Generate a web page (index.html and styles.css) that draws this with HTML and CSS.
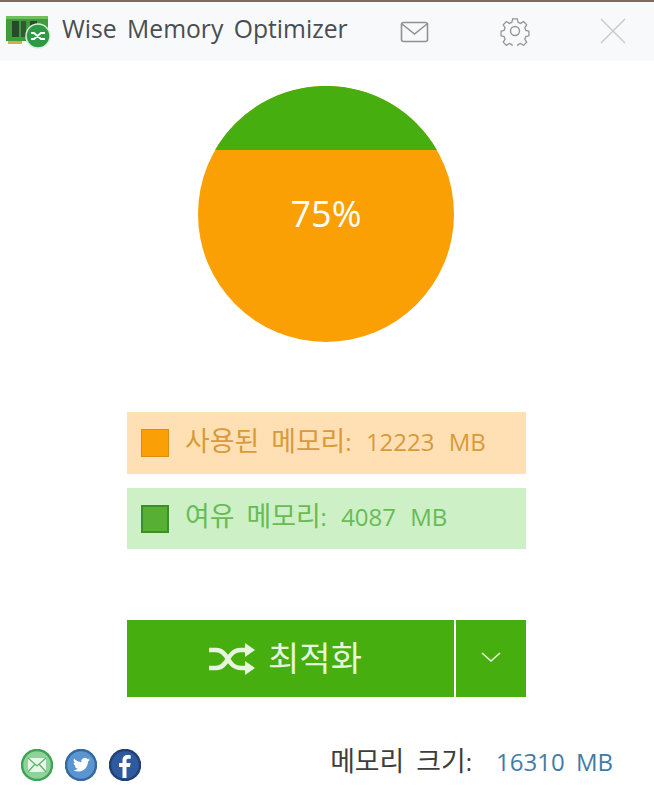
FILE: index.html
```html
<!DOCTYPE html>
<html lang="ko">
<head>
    <meta charset="UTF-8">
    <meta name="viewport" content="width=device-width, initial-scale=1.0">
    <title>Wise Memory Optimizer</title>
    <link rel="stylesheet" href="styles.css">
</head>
<body>
    <div class="titlebar">
        <svg class="logo" width="46" height="36" viewBox="0 0 46 36">
            <rect x="1" y="1" width="42" height="25" fill="#3f9b3c"/>
            <rect x="1" y="1" width="42" height="3" fill="#6fc05a"/>
            <rect x="3" y="26" width="14" height="3" fill="#c9b24a"/>
            <rect x="7" y="6" width="7" height="16" fill="#274a2a"/>
            <rect x="16" y="6" width="5" height="16" fill="#2f5a33"/>
            <rect x="25" y="6" width="7" height="9" fill="#274a2a"/>
            <circle cx="33" cy="21" r="12" fill="#2f9a45" stroke="#d8efd8" stroke-width="1.5"/>
            <path d="M26 18h3l7 6h4M26 24h3l7-6h4" fill="none" stroke="#fff" stroke-width="1.8"/>
        </svg>
        <span class="app-name">Wise Memory Optimizer</span>
        <svg class="mail-btn" width="30" height="24" viewBox="0 0 30 24" fill="none" stroke="#8f9192" stroke-width="1.6">
            <rect x="1.5" y="2.5" width="26" height="19" rx="2"/>
            <path d="M2 4l12.500 10L27 4"/>
        </svg>
        <svg class="gear-btn" width="30" height="30" viewBox="0 0 30 30" fill="none" stroke="#949697" stroke-width="1.4">
            <path d="M12.500 2h5l.8 3.700 2.700 1.200 3.300-2 3.300 3.500-2 3.200 1.100 2.800 3.300.9v4.900l-3.300.9-1.100 2.700 2 3.300-3.400 3.400-3.200-2-2.700 1.100-.8 3.700h-5l-.8-3.700-2.700-1.100-3.200 2-3.400-3.400 2-3.300-1.100-2.700-3.300-.9v-4.900l3.300-.9 1.100-2.800-2-3.200 3.300-3.500 3.300 2 2.700-1.200z" transform="translate(1 1) scale(.93)"/>
            <circle cx="15" cy="15" r="4.500"/>
        </svg>
        <svg class="close-btn" width="28" height="28" viewBox="0 0 28 28" stroke="#c9cbcc" stroke-width="1.5">
            <path d="M2 2l24 24M26 2L2 26"/>
        </svg>
    </div>

    <div class="chart">
        <svg width="256" height="256" viewBox="0 0 256 256">
            <circle cx="128" cy="128" r="128" fill="#faa005"/>
            <path d="M17.100 64A128 128 0 0 1 238.900 64Z" fill="#46ae0e"/>
            <text class="chart-label" x="128" y="141" text-anchor="middle">75%</text>
        </svg>
    </div>

    <div class="legend">
        <div class="legend-row used">
            <span class="swatch"></span>
            <span class="legend-text"><span class="ko">사용된 메모리</span>: 12223 MB</span>
        </div>
        <div class="legend-row free">
            <span class="swatch"></span>
            <span class="legend-text"><span class="ko">여유 메모리</span>: 4087 MB</span>
        </div>
    </div>

    <div class="actions">
        <div class="btn-main">
            <svg width="48" height="32" viewBox="0 0 48 32" fill="none" stroke="#e6f5dd" stroke-width="4.500">
                <path d="M1 7h7c6 0 9 4 12 9s6 9 13 9h6M1 25h7c6 0 9-4 12-9s6-9 13-9h6"/>
                <path d="M37 0l10 7-10 7zM37 18l10 7-10 7z" fill="#e6f5dd" stroke="none"/>
            </svg>
            <span>최적화</span>
        </div>
        <div class="btn-more">
            <svg class="chevron" width="22" height="12" viewBox="0 0 22 12" fill="none" stroke="#e6f5dd" stroke-width="1.600">
                <path d="M2 2l9 8 9-8"/>
            </svg>
        </div>
    </div>

    <div class="footer">
        <div class="social">
            <svg width="32" height="32" viewBox="0 0 32 32">
                <circle cx="16" cy="16" r="15" fill="#8fd29a" stroke="#3fa356" stroke-width="2.500"/>
                <rect x="7" y="9" width="18" height="14" fill="#e9f6ea"/>
                <path d="M7 9l9 8 9-8M7 23l7-8M25 23l-7-8" fill="none" stroke="#5bb56c" stroke-width="1.300"/>
            </svg>
            <svg width="32" height="32" viewBox="0 0 32 32">
                <circle cx="16" cy="16" r="15" fill="#5b95cf" stroke="#34689f" stroke-width="2.500"/>
                <path d="M25 10.500c-.7.3-1.400.5-2 .6.700-.4 1.300-1.100 1.600-1.900-.7.4-1.400.7-2.200.8a3.500 3.500 0 0 0-6 3.200c-3-.2-5.600-1.600-7.300-3.700-.9 1.600-.4 3.600 1.100 4.600-.6 0-1.100-.2-1.600-.4 0 1.700 1.200 3.100 2.800 3.500-.5.100-1 .1-1.600 0 .4 1.400 1.700 2.400 3.300 2.400a7 7 0 0 1-5.200 1.500c5 3.200 14.500 1.400 15.200-8.500.7-.5 1.400-1.300 1.900-2.100z" fill="#fff"/>
            </svg>
            <svg width="32" height="32" viewBox="0 0 32 32">
                <circle cx="16" cy="16" r="15" fill="#2f5a9e" stroke="#233f78" stroke-width="2.500"/>
                <path d="M17.500 29V18h3.500l.6-4h-4.100v-2.300c0-1.200.4-1.900 2-1.900h2.200V6.200C21.200 6.100 20 6 18.800 6c-3.200 0-5.300 1.900-5.300 5.300V14H10v4h3.500v11z" fill="#fff"/>
            </svg>
        </div>
        <div class="mem-size">
            <span class="mem-label"><span class="ko">메모리 크기</span>:</span>
            <span class="mem-value">16310 MB</span>
        </div>
    </div>
</body>
</html>
```

FILE: styles.css
```css
html, body {
    height: 100%;
}
body {
    margin: 0;
    background: #fff;
    font-family: "Open Sans", "Noto Sans CJK KR", sans-serif;
    overflow: hidden;
}
.titlebar {
    display: flex;
    align-items: center;
    height: 59px;
    border-top: 2px solid #7a6a60;
    background: #f8f9fb;
    padding-left: 5px;
}
.logo {
    flex: none;
    margin-top: 2px;
}
.app-name {
    flex: none;
    width: 338px;
    margin-left: 11px;
    margin-top: -6px;
    font-size: 24.700px;
    color: #4a4d52;
    word-spacing: 4px;
    white-space: nowrap;
}
.mail-btn {
    flex: none;
    margin-top: 1px;
}
.gear-btn {
    flex: none;
    margin-left: 70px;
    margin-top: -1px;
}
.close-btn {
    flex: none;
    margin-left: 69px;
    margin-top: -2px;
}
.chart {
    display: flex;
    justify-content: center;
    margin-top: 25px;
    margin-left: -2px;
}
.chart svg {
    display: block;
}
.chart-label {
    font-size: 36px;
    fill: #fff;
}
.ko {
    font-size: 1.120em;
    word-spacing: 5px;
}
.legend {
    display: flex;
    flex-direction: column;
    gap: 14px;
    width: 399px;
    margin: 70px 0 0 127px;
}
.legend-row {
    display: flex;
    align-items: center;
    padding-left: 14px;
    font-size: 24px;
    word-spacing: 8px;
    white-space: nowrap;
}
.legend-row .swatch {
    flex: none;
    width: 28px;
    height: 28px;
    box-sizing: border-box;
    margin-right: 16px;
}
.legend-text {
    margin-top: -8px;
}
.used {
    height: 62px;
    background: #ffe0b5;
    color: #d99a3a;
}
.used .swatch {
    background: #fb9f06;
    border: 1px solid #d98f10;
}
.free {
    height: 61px;
    background: #cdf0c7;
    color: #68bb55;
}
.free .swatch {
    background: #57b033;
    border: 2px solid #3b8f2a;
}
.actions {
    display: flex;
    gap: 2px;
    width: 399px;
    height: 77px;
    margin: 71px 0 0 127px;
}
.btn-main, .btn-more {
    display: flex;
    align-items: center;
    justify-content: center;
    background: #46ae0e;
    color: #e6f5dd;
}
.btn-main {
    box-sizing: border-box;
    width: 327px;
    padding-right: 11px;
    gap: 12px;
    font-size: 34px;
}
.btn-main span {
    margin-top: -4px;
}
.btn-more {
    width: 70px;
}
.chevron {
    margin-top: -4px;
}
.footer {
    display: flex;
    align-items: center;
    justify-content: space-between;
    height: 32px;
    margin-top: 52px;
    padding: 0 41px 0 21px;
}
.social {
    display: flex;
    gap: 12px;
}
.mem-size {
    display: flex;
    align-items: baseline;
    gap: 24px;
    font-size: 24px;
    white-space: nowrap;
    word-spacing: 5px;
    margin-top: -12px;
}
.mem-label {
    color: #3d3d3d;
}
.mem-value {
    color: #3f7ca6;
}
```
